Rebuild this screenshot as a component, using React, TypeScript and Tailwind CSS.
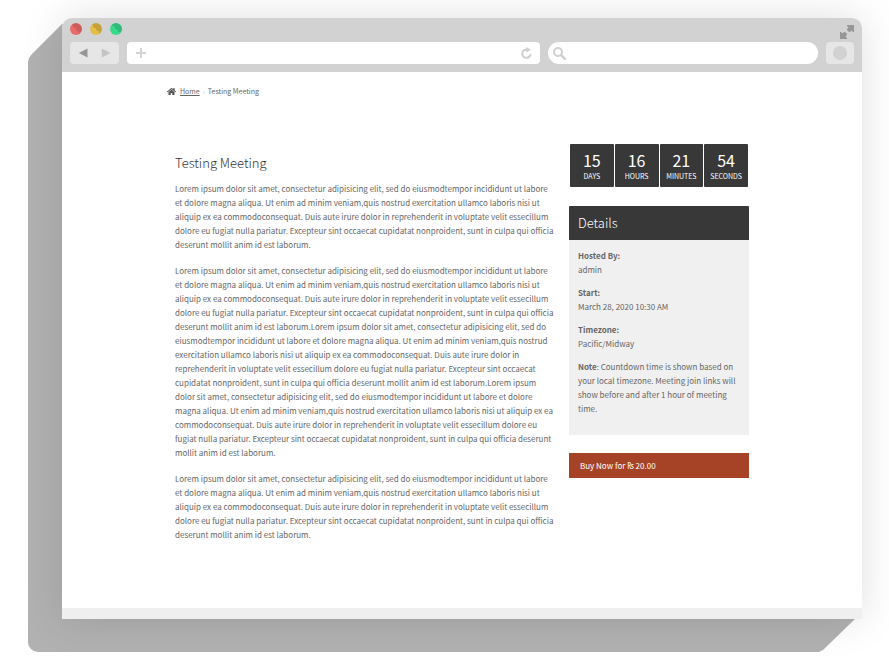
import React from 'react';
import { FaHome } from 'react-icons/fa';

const LOREM =
    'Lorem ipsum dolor sit amet, consectetur adipisicing elit, sed do eiusmodtempor incididunt ut labore et dolore magna aliqua. Ut enim ad minim veniam,quis nostrud exercitation ullamco laboris nisi ut aliquip ex ea commodoconsequat. Duis aute irure dolor in reprehenderit in voluptate velit essecillum dolore eu fugiat nulla pariatur. Excepteur sint occaecat cupidatat nonproident, sunt in culpa qui officia deserunt mollit anim id est laborum.';

const paragraphs = [LOREM, LOREM + LOREM + LOREM, LOREM];

const countdown = [
    { value: 15, label: 'DAYS' },
    { value: 16, label: 'HOURS' },
    { value: 21, label: 'MINUTES' },
    { value: 54, label: 'SECONDS' },
];

const details = [
    { term: 'Hosted By:', value: 'admin' },
    { term: 'Start:', value: 'March 28, 2020 10:30 AM' },
    { term: 'Timezone:', value: 'Pacific/Midway' },
];

const lights = [
    { name: 'Close', color: 'bg-linear-45 from-[#e96b69] from-50% to-[#cd5d5c] to-50%' },
    { name: 'Minimize', color: 'bg-linear-45 from-[#e3bd45] from-50% to-[#c4a239] to-50%' },
    { name: 'Zoom', color: 'bg-linear-45 from-[#39d98c] from-50% to-[#31bb78] to-50%' },
];

function BrowserBar() {
    return (
        <header className="bg-[#d2d2d2] rounded-t-[10px] px-2 pt-[5px] pb-2">
            <div className="flex justify-between h-4 mb-[3px]">
                <div className="flex gap-2">
                    {lights.map((light) => (
                        <button key={light.name} aria-label={light.name} className={`size-3 rounded-full ${light.color}`} />
                    ))}
                </div>
                <button aria-label="Full screen" className="self-end">
                    <svg width="14" height="14" viewBox="0 0 14 14" fill="#969696" className="block">
                        <path d="M7 0h7v7h-1l-1.5-1.5L10 7H9L7 5V4l1.500-1.500L7 1z" />
                        <path d="M0 7h1l1.500 1.500L4 7h1l2 2v1l-1.500 1.500L7 13v1H0z" />
                    </svg>
                </button>
            </div>
            <div className="flex gap-2 h-[22px]">
                <div className="flex items-center justify-between w-[49px] px-2 rounded bg-[#e6e6e6]">
                    <button aria-label="Back">
                        <svg width="10" height="10" viewBox="0 0 10 10" className="block">
                            <path d="M9.5 .5v9L.8 5z" fill="#969696" />
                        </svg>
                    </button>
                    <button aria-label="Forward">
                        <svg width="10" height="10" viewBox="0 0 10 10" className="block">
                            <path d="M.8 .5v9L9.5 5z" fill="#c4c4c4" />
                        </svg>
                    </button>
                </div>
                <div className="flex items-center flex-1 px-2 rounded bg-white">
                    <button aria-label="New page">
                        <svg width="12" height="12" viewBox="0 0 12 12" className="block">
                            <path d="M6 1v10M1 6h10" stroke="#d2d2d2" strokeWidth="2" />
                        </svg>
                    </button>
                    <input aria-label="Address" className="flex-1 min-w-0 px-2 text-xs outline-none" />
                    <button aria-label="Reload">
                        <svg width="11" height="12" viewBox="0 0 11 12" className="block">
                            <path d="M6.5 2.6A4.2 4.2 0 1 0 9.6 6.9" fill="none" stroke="#cfcfcf" strokeWidth="2" />
                            <path d="M5 0l5 2.8L5 5.6z" fill="#cfcfcf" />
                        </svg>
                    </button>
                </div>
                <div className="flex items-center w-[270px] px-[5px] rounded-full bg-white">
                    <svg width="13" height="13" viewBox="0 0 13 13" fill="none" stroke="#cfcfcf" strokeWidth="2" className="block">
                        <circle cx="5" cy="5" r="4" />
                        <path d="M8 8l3.8 3.8" strokeWidth="2.4" strokeLinecap="round" />
                    </svg>
                    <input aria-label="Search" className="flex-1 min-w-0 px-2 text-xs outline-none" />
                </div>
                <button aria-label="Menu" className="flex items-center justify-center w-7 rounded bg-[#e6e6e6]">
                    <span className="size-3.5 rounded-full bg-[#d2d2d2]" />
                </button>
            </div>
        </header>
    );
}

function Sidebar() {
    return (
        <aside className="w-[180px] shrink-0">
            <div className="grid grid-cols-4 gap-px px-px mb-[19px]">
                {countdown.map((item) => (
                    <div key={item.label} className="h-[43px] pt-[7px] rounded-[1px] bg-[#383838] text-white text-center">
                        <div className="text-[16px] leading-[18px]">{item.value}</div>
                        <div className="text-[7px] leading-[14px]">{item.label}</div>
                    </div>
                ))}
            </div>
            <section className="mb-[18px] bg-[#f0f0f0]">
                <h2 className="px-[9px] rounded-t-[1px] bg-[#383838] text-white text-[13px] leading-[34px] font-light">
                    Details
                </h2>
                <div className="px-[9px] pt-[9px] pb-[19px]">
                    <dl>
                        {details.map((item) => (
                            <div key={item.term} className="mb-[9px]">
                                <dt className="font-bold">{item.term}</dt>
                                <dd>{item.value}</dd>
                            </div>
                        ))}
                    </dl>
                    <p>
                        <strong className="font-bold">Note</strong>: Countdown time is shown based on your local
                        timezone. Meeting join links will show before and after 1 hour of meeting time.
                    </p>
                </div>
            </section>
            <a href="#buy" className="block px-[11px] bg-[#a64225] text-white leading-[25px]">
                Buy Now for <span className="font-['Noto_Sans']">₨</span> 20.00
            </a>
        </aside>
    );
}

export default function App() {
    return (
        <div className="min-h-screen overflow-hidden bg-white pt-[18px] pb-[52px] pl-[62px] pr-[27px]">
            <div className="relative">
                {/* Slanted block behind the window */}
                <div className="absolute -left-[34px] right-[7px] top-[6px] -bottom-[33px] rounded-bl-[10px] bg-[#b1b1b1] [clip-path:polygon(34px_0,3px_31px,1px_34px,0_38px,0_100%,calc(100%_-_36px)_100%,calc(100%_-_32px)_calc(100%_-_2px),100%_calc(100%_-_33px),100%_0)]" />
                <div className="relative rounded-t-[10px] bg-white shadow-[0_0_40px_rgba(0,0,0,0.13)] font-['Noto_Sans_CJK_SC','Open_Sans',sans-serif] text-[8px] leading-[14px] text-[#666666]">
                    <BrowserBar />
                    <div className="pt-3 pl-[105px] pr-[113px] pb-[54px]">
                        <nav aria-label="Breadcrumb" className="flex items-center mb-[46px] text-[7px]">
                            <FaHome size={9} className="mr-1 text-[#555555]" />
                            <a href="#home" className="underline">Home</a>
                            <span className="mx-[3px] text-[#bbbbbb]">›</span>
                            <span>Testing Meeting</span>
                        </nav>
                        <div className="flex gap-3.5">
                            <main className="flex-1 pl-2 pt-[9px]">
                                <h1 className="mb-[9px] text-[13px] leading-5 font-light text-[#333333]">Testing Meeting</h1>
                                {paragraphs.map((text, index) => (
                                    <p key={index} className="mb-3">{text}</p>
                                ))}
                            </main>
                            <Sidebar />
                        </div>
                    </div>
                    <footer className="h-[11px] bg-[#efefef]" />
                </div>
            </div>
        </div>
    );
}
